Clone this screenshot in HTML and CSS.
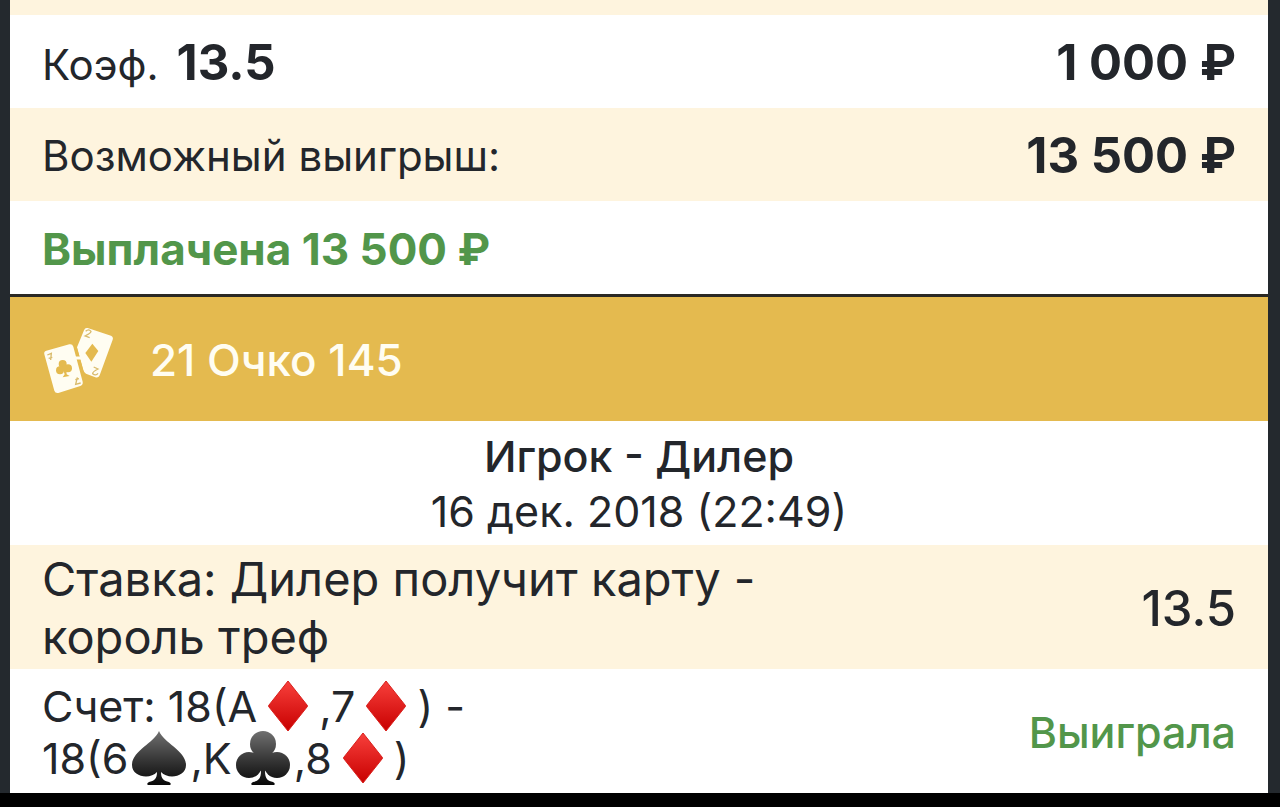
FILE: index.html
```html
<!DOCTYPE html>
<html lang="ru">
<head>
<meta charset="utf-8">
<meta name="viewport" content="width=device-width, initial-scale=1">
<title>История ставок</title>
<link rel="stylesheet" href="styles.css">
</head>
<body>
<svg class="defs" aria-hidden="true">
  <defs>
    <linearGradient id="red" x1="0" y1="0" x2="0" y2="1"><stop offset="0" stop-color="#f8403c"/><stop offset="1" stop-color="#c80000"/></linearGradient>
    <linearGradient id="black" x1="0" y1="0" x2="0" y2="54" gradientUnits="userSpaceOnUse"><stop offset="0" stop-color="#707070"/><stop offset="0.5" stop-color="#3a3a3a"/><stop offset="1" stop-color="#080808"/></linearGradient>
    <symbol id="diamond" viewBox="0 0 54 54"><path d="M27 2 46 26Q47 27 46 28L27 52 8 28Q7 27 8 26Z" fill="url(#red)" stroke="#d9201c" stroke-width="1"/></symbol>
    <symbol id="spade" viewBox="0 0 54 54"><path d="M27 0C32 12 54 20 54 34C54 46 36 49 29 41C29 48 32 50 37 51Q40 53 38 54H16Q14 53 17 51C22 50 25 48 25 41C18 49 0 46 0 34C0 20 22 12 27 0Z" fill="url(#black)"/></symbol>
    <symbol id="club" viewBox="0 0 54 54"><g fill="url(#black)"><circle cx="27" cy="13" r="13"/><circle cx="13" cy="34" r="13"/><circle cx="41" cy="34" r="13"/><path d="M18 21H36L38 34 29 40C29 48 32 50 37 51Q40 53 38 54H16Q14 53 17 51C22 50 25 48 25 40L16 34Z"/></g></symbol>
  </defs>
</svg>
<main class="history">
  <article class="bet">
    <div class="row row-tail tinted"></div>
    <div class="row"><span class="factor">Коэф. <strong class="amount">13.5</strong></span><strong class="amount">1 000 ₽</strong></div>
    <div class="row tinted"><span>Возможный выигрыш:</span><strong class="amount">13 500 ₽</strong></div>
    <div class="row"><strong class="paid">Выплачена 13 500 ₽</strong></div>
  </article>
  <article class="bet bet-next">
    <header class="game">
      <svg class="cards" viewBox="40 30 220 210" aria-hidden="true">
        <path d="M176 39 246 62Q254 66 251 74L212 181Q208 190 199 187L171 176Q165 173 163 165L144 97 165 46Q168 37 176 39Z" fill="#fffdf2"/>
        <path d="M52 107 121 88Q130 86 133 95L161 200Q163 209 154 213L88 234Q79 236 76 227L46 118Q44 109 52 107Z" fill="#fffdf2"/>
        <path d="M138 90 164 184" stroke="#e4ba4f" stroke-width="7"/>
        <path d="M137 129H160" stroke="#fffdf2" stroke-width="9"/>
        <g fill="#e4ba4f"><path d="M190 86 208 108 187 140 169 114Z"/>
        <circle cx="101" cy="147" r="12"/><circle cx="93" cy="166" r="12"/><circle cx="117" cy="160" r="12"/>
        <path d="M98 151 111 151 113 178 122 183 101 187 107 178Z"/></g>
        <g fill="none" stroke="#d9bb6c" stroke-width="4"><path d="M55 120 67 115 65 135M59 130 70 127M155 204 140 208 145 187M139 194 150 191M170 49Q179 40 186 49Q187 53 168 63L182 68M207 175Q200 184 191 176Q190 171 207 162L194 156"/></g>
      </svg>
      <h2 class="game-title">21 Очко 145</h2>
    </header>
    <div class="match">
      <h3 class="teams">Игрок - Дилер</h3>
      <time datetime="2018-12-16T22:49">16 дек. 2018 (22:49)</time>
    </div>
    <div class="row tall tinted">
      <p class="pick">Ставка: Дилер получит карту -<br>король треф</p>
      <span class="odds">13.5</span>
    </div>
    <div class="row tall">
      <p class="score">Счет: 18(A<svg class="suit" role="img" aria-label="бубны"><use href="#diamond"/></svg>,7<svg class="suit" role="img" aria-label="бубны"><use href="#diamond"/></svg>) -<br>18(6<svg class="suit" role="img" aria-label="пики"><use href="#spade"/></svg>,K<svg class="suit" role="img" aria-label="трефы"><use href="#club"/></svg>,8<svg class="suit" role="img" aria-label="бубны"><use href="#diamond"/></svg>)</p>
      <span class="won">Выиграла</span>
    </div>
  </article>
</main>
</body>
</html>
```
FILE: styles.css
```css
* { box-sizing: border-box; }
html { background: #000; }
body { margin: 0; font-family: Inter, "Liberation Sans", sans-serif; font-size: 42px; color: #23262b; }
h2, h3, p { margin: 0; }
.defs { position: absolute; width: 0; height: 0; }
.history { padding: 0 12px 0 10px; background: #24292e; }
.bet { background: #fff; }
.bet-next { border-top: 3px solid #2b2924; }
.row { display: flex; align-items: center; justify-content: space-between; gap: 24px; min-height: 93px; padding: 2px 32px 0; }
.row-tail { min-height: 15px; }
.tinted { background: #fef4de; }
.tall { min-height: 124px; }
.factor { display: flex; align-items: baseline; gap: 18px; }
.amount { font-size: 49px; font-weight: 700; }
.paid { font-size: 44px; font-weight: 700; color: #52964a; }
.game { display: flex; align-items: center; gap: 34px; min-height: 124px; padding: 2px 32px 0; background: #e4ba4f; color: #fffdf2; }
.cards { width: 74px; height: 70px; }
.game-title { font-size: 44px; font-weight: 500; }
.match { display: flex; flex-direction: column; align-items: center; min-height: 124px; padding: 8px 32px 6px; font-size: 43px; line-height: 55px; }
.teams { font-size: 43px; font-weight: 500; }
.pick { font-size: 47px; line-height: 58px; }
.odds { font-size: 49px; font-weight: 500; }
.score { font-size: 43px; line-height: 52px; white-space: nowrap; }
.suit { width: 54px; height: 54px; margin: -10px 4px; vertical-align: -1px; }
.won { font-size: 43px; font-weight: 500; color: #52964a; }
```
